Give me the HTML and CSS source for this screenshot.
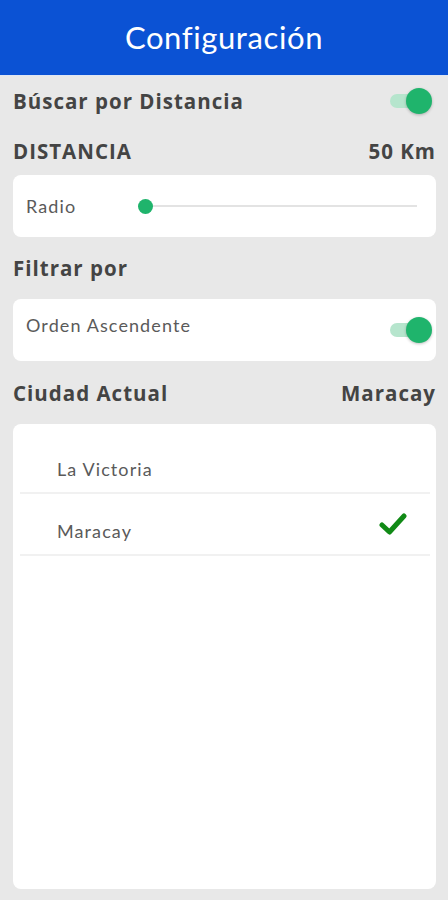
FILE: index.html
```html
<!DOCTYPE html>
<html lang="es">
<head>
<meta charset="utf-8">
<title>Configuración</title>
<link rel="stylesheet" href="styles.css">
</head>
<body>
<header class="toolbar"><h1 class="title">Configuración</h1></header>
<main class="content">
  <div class="row row-first">
    <span class="label">Búscar por Distancia</span>
    <span class="toggle"><span class="toggle-track"></span><span class="toggle-knob"></span></span>
  </div>
  <div class="row row-second">
    <span class="label">DISTANCIA</span>
    <span class="label">50 Km</span>
  </div>
  <div class="card card-range">
    <span class="item-text">Radio</span>
    <div class="range"><span class="range-track"></span><span class="range-knob"></span></div>
  </div>
  <div class="row row-filter">
    <span class="label">Filtrar por</span>
  </div>
  <div class="card card-order">
    <span class="item-text order-text">Orden Ascendente</span>
    <span class="toggle toggle-card"><span class="toggle-track"></span><span class="toggle-knob"></span></span>
  </div>
  <div class="row row-city">
    <span class="label">Ciudad Actual</span>
    <span class="label">Maracay</span>
  </div>
  <div class="card card-list">
    <div class="list-item"><span class="item-text">La Victoria</span></div>
    <div class="list-item">
      <span class="item-text">Maracay</span>
      <svg class="check" viewBox="0 0 28 22" width="28" height="22" aria-hidden="true">
        <path d="M3 12 L10.5 19 L25 3" fill="none" stroke="#118a16" stroke-width="5" stroke-linecap="round" stroke-linejoin="round"/>
      </svg>
    </div>
  </div>
</main>
</body>
</html>
```
FILE: styles.css
```css
* { box-sizing: border-box; }
html, body { margin: 0; padding: 0; }
body {
  width: 448px;
  height: 900px;
  background: #e8e8e8;
  font-family: "Noto Sans", "Open Sans", sans-serif;
  overflow: hidden;
}
.toolbar {
  height: 76px;
  background: #0b52d4;
  border-bottom: 1px solid #dfe6f3;
  display: flex;
  align-items: center;
  justify-content: center;
}
.title {
  margin: 0;
  color: #ffffff;
  font-family: Lato, "Open Sans", sans-serif;
  font-weight: 400;
  font-size: 31px;
  letter-spacing: 0.6px;
  padding-bottom: 1px;
}
.content {
  padding: 0 12px 0 13px;
  display: flex;
  flex-direction: column;
}
.row {
  display: flex;
  align-items: center;
  justify-content: space-between;
}
.row-first { height: 50px; }
.row-second { height: 49px; }
.row-filter { height: 62px; }
.row-city { height: 63px; }
.label {
  font-family: "Open Sans", "Noto Sans", sans-serif;
  font-weight: 700;
  font-size: 20.5px;
  letter-spacing: 1px;
  color: #444444;
}
.card {
  background: #ffffff;
  border-radius: 8px;
}
.item-text {
  font-family: Lato, "Open Sans", sans-serif;
  font-size: 18px;
  letter-spacing: 1.1px;
  color: #5a5a5a;
  line-height: 20px;
}
.card-range {
  height: 62px;
  display: flex;
  align-items: center;
  padding: 0 19px 0 13px;
}
.range {
  position: relative;
  flex: 1;
  height: 16px;
  margin-left: 62px;
}
.range-track {
  position: absolute;
  left: 0; right: 0; top: 7px;
  height: 2px;
  background: #e3e3e3;
}
.range-knob {
  position: absolute;
  left: 0; top: 1px;
  width: 15px; height: 15px;
  border-radius: 50%;
  background: #1fb46c;
}
.card-order {
  height: 62px;
  display: flex;
  justify-content: space-between;
  padding: 0 4px 0 13px;
}
.order-text { margin-top: 16px; }
.toggle {
  position: relative;
  width: 42px;
  height: 26px;
  flex: none;
}
.toggle-card { margin-top: 18px; }
.toggle-track {
  position: absolute;
  left: 0; right: 4px; top: 6px;
  height: 14px;
  border-radius: 7px;
  background: #b6e5cd;
}
.toggle-knob {
  position: absolute;
  right: 0; top: 0;
  width: 26px; height: 26px;
  border-radius: 50%;
  background: #1fb46c;
  box-shadow: 0 1px 3px rgba(0,0,0,0.25);
}
.row-first .toggle { margin-right: 4px; }
.card-list {
  height: 465px;
  padding: 8px 6px 0 7px;
}
.list-item {
  height: 62px;
  border-bottom: 2px solid #f1f1f1;
  display: flex;
  align-items: flex-start;
  justify-content: space-between;
  padding: 27px 23px 0 37px;
}
.check { margin-top: -8px; }
```
